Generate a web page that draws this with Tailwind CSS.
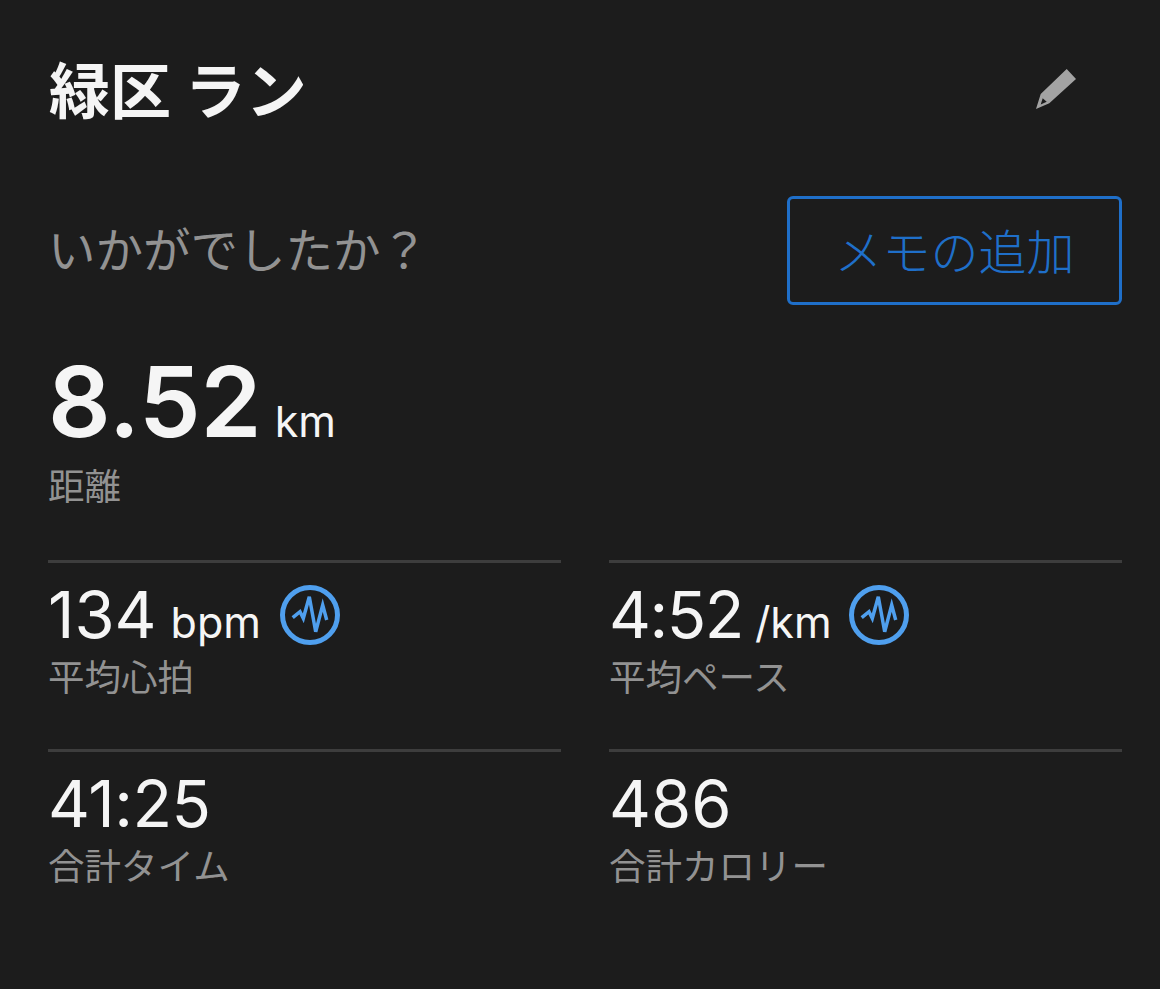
<!DOCTYPE html>
<html lang="ja">
<head>
  <meta charset="UTF-8" />
  <title>緑区 ラン</title>
  <script src="https://cdn.jsdelivr.net/npm/@tailwindcss/browser@4"></script>
</head>
<body class="bg-[#1c1c1c] font-['Inter','Noto_Sans_CJK_JP',sans-serif]">
  <div class="w-[1160px] h-[989px] overflow-hidden pl-[48px] pr-[38px] text-[#f5f5f5]">
    <!-- Header -->
    <div class="flex items-center justify-between h-[196px] pb-[18px] pr-[46px]">
      <h1 class="ml-[1px] mb-[4px] text-[61px] leading-none font-bold font-['Noto_Sans_CJK_JP',sans-serif]">緑区 ラン</h1>
      <svg class="w-[40px] h-[40px]" viewBox="0 0 40 40" fill="#a3a3a3">
        <path d="M30.700 0 L40 10 L13.300 34.300 L0 40 L4.700 25 Z M6.700 29.300 L4.700 35.500 L10.700 32.700 Z" fill-rule="evenodd" />
      </svg>
    </div>

    <!-- Note row -->
    <div class="flex items-center justify-between">
      <span class="mb-[5px] text-[47.500px] leading-none text-[#929292] font-['Noto_Sans_CJK_JP',sans-serif]">いかがでしたか？</span>
      <div class="w-[335px] h-[109px] pb-[4px] flex items-center justify-center border-[3px] border-[#1f6fc9] rounded-[6px] text-[48px] leading-none text-[#1f6fc9] font-light font-['Noto_Sans_CJK_JP',sans-serif]">メモの追加</div>
    </div>

    <!-- Distance -->
    <div class="mt-[47px] flex items-baseline gap-[13px] h-[100px]">
      <span class="text-[98px] leading-[100px] font-semibold">8.52</span>
      <span class="text-[43px] leading-none">km</span>
    </div>
    <div class="mt-[15px] text-[36.500px] leading-none text-[#929292] font-['Noto_Sans_CJK_JP',sans-serif]">距離</div>

    <!-- Stats -->
    <div class="mt-[56px] grid grid-cols-2 gap-x-[48px]">
      <div class="border-t-[3px] border-[#3d3d3d] h-[189px] pt-[16px]">
        <div class="flex items-center h-[72px]">
          <span class="text-[65px] leading-none">134</span>
          <span class="ml-[14px] mt-[16px] text-[43px] leading-none">bpm</span>
          <svg class="ml-[19px] w-[60px] h-[60px]" viewBox="0 0 60 60" fill="none" stroke="#4f9fee">
            <circle cx="30" cy="30" r="27.500" stroke-width="5" />
            <path d="M12.700 32.700 L20 26.700 L23.300 33.300 L29.300 11.700 L35.700 46.700 L42.700 20 L46.700 35" stroke-width="3.500" />
          </svg>
        </div>
        <div class="mt-[7px] text-[36.500px] leading-none text-[#929292] font-['Noto_Sans_CJK_JP',sans-serif]">平均心拍</div>
      </div>
      <div class="border-t-[3px] border-[#3d3d3d] h-[189px] pt-[16px]">
        <div class="flex items-center h-[72px]">
          <span class="text-[65px] leading-none tracking-[-1.500px]">4:52</span>
          <span class="ml-[12px] mt-[16px] text-[43px] leading-none">/km</span>
          <svg class="ml-[17px] w-[60px] h-[60px]" viewBox="0 0 60 60" fill="none" stroke="#4f9fee">
            <circle cx="30" cy="30" r="27.500" stroke-width="5" />
            <path d="M12.700 32.700 L20 26.700 L23.300 33.300 L29.300 11.700 L35.700 46.700 L42.700 20 L46.700 35" stroke-width="3.500" />
          </svg>
        </div>
        <div class="mt-[7px] text-[36.500px] leading-none text-[#929292] font-['Noto_Sans_CJK_JP',sans-serif]">平均ペース</div>
      </div>
      <div class="border-t-[3px] border-[#3d3d3d] pt-[16px]">
        <div class="flex items-center h-[72px]">
          <span class="text-[65px] leading-none tracking-[-0.500px]">41:25</span>
        </div>
        <div class="mt-[7px] text-[36.500px] leading-none text-[#929292] font-['Noto_Sans_CJK_JP',sans-serif]">合計タイム</div>
      </div>
      <div class="border-t-[3px] border-[#3d3d3d] pt-[16px]">
        <div class="flex items-center h-[72px]">
          <span class="text-[65px] leading-none">486</span>
        </div>
        <div class="mt-[7px] text-[36.500px] leading-none text-[#929292] font-['Noto_Sans_CJK_JP',sans-serif]">合計カロリー</div>
      </div>
    </div>
  </div>
</body>
</html>
